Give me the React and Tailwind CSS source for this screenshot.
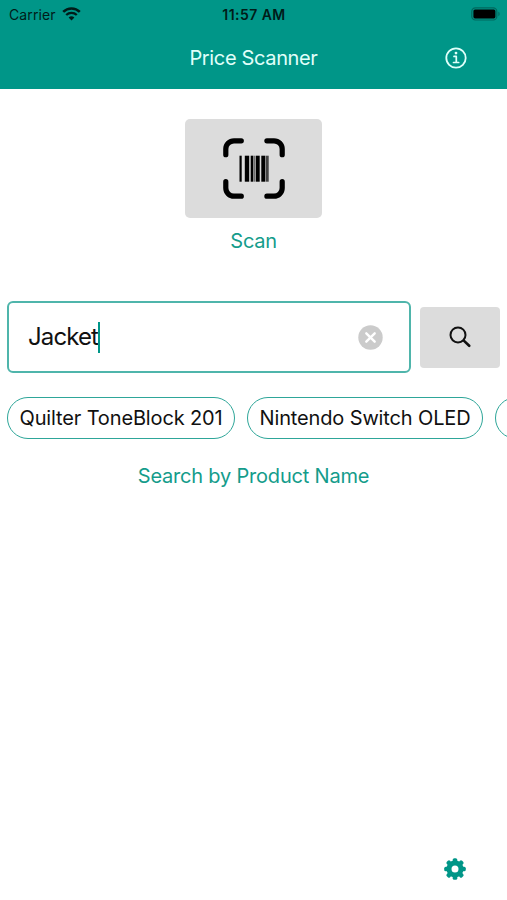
const recentSearches = ["Quilter ToneBlock 201", "Nintendo Switch OLED", ""];

const WifiIcon = () => (
  <svg width="19" height="14" viewBox="0 0 19 14" fill="none">
    <path d="M1.2 4.9a11.8 11.8 0 0 1 16.6 0" stroke="#001c19" strokeWidth="2.6" />
    <path d="M4.2 8a7.6 7.6 0 0 1 10.6 0" stroke="#001c19" strokeWidth="2.3" />
    <path d="M9.5 13.6 6.6 10.6a4.1 4.1 0 0 1 5.8 0Z" fill="#001c19" />
  </svg>
);

const BatteryIcon = () => (
  <svg width="30" height="14" viewBox="0 0 30 14">
    <rect x="0.8" y="0.8" width="25" height="12.2" rx="3.6" fill="none" stroke="#00685e" strokeWidth="1.2" />
    <rect x="2.4" y="2.4" width="22" height="9" rx="1.6" fill="#000" />
    <path d="M27.4 4.8c1.6.6 1.6 3.8 0 4.4Z" fill="#00685e" />
  </svg>
);

const InfoIcon = () => (
  <svg width="22" height="22" viewBox="0 0 22 22" fill="none" stroke="#e0fffa">
    <circle cx="11" cy="11" r="9.7" strokeWidth="1.8" />
    <path d="M9 9.4h2.3v6M8.5 15.5h5.2" strokeWidth="1.7" strokeLinecap="round" strokeLinejoin="round" />
    <circle cx="11" cy="6.1" r="1.4" fill="#e0fffa" stroke="none" />
  </svg>
);

const BarcodeScanIcon = () => (
  <svg width="62" height="62" viewBox="0 0 62 62">
    <path
      d="M18.3 2.8H11A8.2 8.2 0 0 0 2.800 11v5.700M43.900 2.800H51A8.200 8.200 0 0 1 59.200 11v5.700M59.200 43.700V50a8.200 8.200 0 0 1-8.200 8.200h-7.100M18.300 58.200H11A8.200 8.200 0 0 1 2.800 50v-6.300"
      fill="none"
      stroke="#000"
      strokeWidth="5.2"
      strokeLinecap="round"
    />
    <g fill="#000">
      <rect x="16.5" y="17.7" width="2.2" height="26" />
      <rect x="21.8" y="17.7" width="4.4" height="26" />
      <rect x="27.7" y="17.7" width="2.4" height="26" />
      <rect x="30.7" y="17.7" width="0.8" height="26" />
      <rect x="32.7" y="17.7" width="4" height="26" />
      <rect x="38.3" y="17.7" width="3.8" height="26" />
      <rect x="42.7" y="17.7" width="1" height="26" />
      <rect x="44.300" y="17.700" width="1.200" height="26" />
    </g>
  </svg>
);

const ClearIcon = () => (
  <svg width="25" height="25" viewBox="0 0 25 25">
    <circle cx="12.5" cy="12.5" r="12.2" fill="#cbcbcb" />
    <path d="m8.300 8.300 8.400 8.400m0-8.400-8.400 8.400" stroke="#fff" strokeWidth="2.400" strokeLinecap="round" />
  </svg>
);

const SearchIcon = () => (
  <svg width="22" height="22" viewBox="0 0 22 22" fill="none" stroke="#111" strokeLinecap="round">
    <circle cx="9" cy="8.900" r="7.500" strokeWidth="2" />
    <path d="m14.800 14.600 5.400 5.200" strokeWidth="2.600" />
  </svg>
);

const teeth = [0, 45, 90, 135, 180, 225, 270, 315];

const GearIcon = () => (
  <svg width="22" height="22" viewBox="0 0 22 22" fill="#009688">
    <circle cx="11" cy="11" r="6" fill="none" stroke="#009688" strokeWidth="5" />
    {teeth.map((angle) => (
      <rect key={angle} x="8.7" y="0.2" width="4.600" height="5" rx="1.600" transform={`rotate(${angle} 11 11)`} />
    ))}
  </svg>
);

const Header = () => (
  <header className="h-[89px] shrink-0 bg-[#009688]">
    <div className="grid h-7 grid-cols-[1fr_auto_1fr] items-center pr-[6px] pl-[7px] text-[#001c19]">
      <div className="flex items-center gap-[6px] pl-[2px]">
        <span className="text-[14px] tracking-[0.12px]">Carrier</span>
        <WifiIcon />
      </div>
      <span className="text-[14px] font-semibold tracking-[0.45px] whitespace-nowrap">11:57 AM</span>
      <div className="flex justify-end">
        <BatteryIcon />
      </div>
    </div>
    <div className="grid h-[60px] grid-cols-[1fr_auto_1fr] items-center pr-10">
      <span />
      <h1 className="pl-10 text-[20px] tracking-[-0.35px] text-[#e0fffa]">Price Scanner</h1>
      <button className="justify-self-end">
        <InfoIcon />
      </button>
    </div>
  </header>
);

const Chip = ({ label }) => (
  <button className="h-[42px] min-w-20 shrink-0 rounded-full border-[1.5px] border-[#2ea699] px-[11.5px] text-[20px] tracking-[-0.14px] whitespace-nowrap text-[#111]">
    {label}
  </button>
);

export default function App() {
  return (
    <div className="flex h-[900px] w-[507px] flex-col overflow-hidden bg-white font-['Inter',sans-serif]">
      <Header />
      <main className="flex grow flex-col">
        <section className="mt-[30px] flex flex-col items-center">
          <button className="flex h-[99px] w-[137px] items-center justify-center rounded-[5px] bg-[#dcdcdc]">
            <BarcodeScanIcon />
          </button>
          <span className="mt-2 text-[20px] leading-[30px] tracking-[-0.3px] text-[#149c8b]">Scan</span>
        </section>
        <section className="mt-[45px] flex items-center gap-[9px] px-[7px]">
          <div className="flex h-[72px] grow items-center rounded-[6px] border-2 border-[#4fb5ab] pr-[26px] pl-[19px]">
            <span className="text-[24px] tracking-[-0.9px] text-[#111]">Jacket</span>
            <span className="h-[31px] w-[2px] bg-[#009688]" />
            <button className="ml-auto">
              <ClearIcon />
            </button>
          </div>
          <button className="flex h-[61px] w-20 items-center justify-center rounded-[4px] bg-[#dcdcdc]">
            <SearchIcon />
          </button>
        </section>
        <section className="mt-6 flex gap-3 overflow-hidden pl-[7px]">
          {recentSearches.map((label) => (
            <Chip key={label} label={label} />
          ))}
        </section>
        <p className="mt-[22px] text-center text-[20px] leading-[30px] tracking-[-0.2px] text-[#149c8b]">
          Search by Product Name
        </p>
        <button className="mt-auto mr-[41px] mb-[20px] self-end">
          <GearIcon />
        </button>
      </main>
    </div>
  );
}
